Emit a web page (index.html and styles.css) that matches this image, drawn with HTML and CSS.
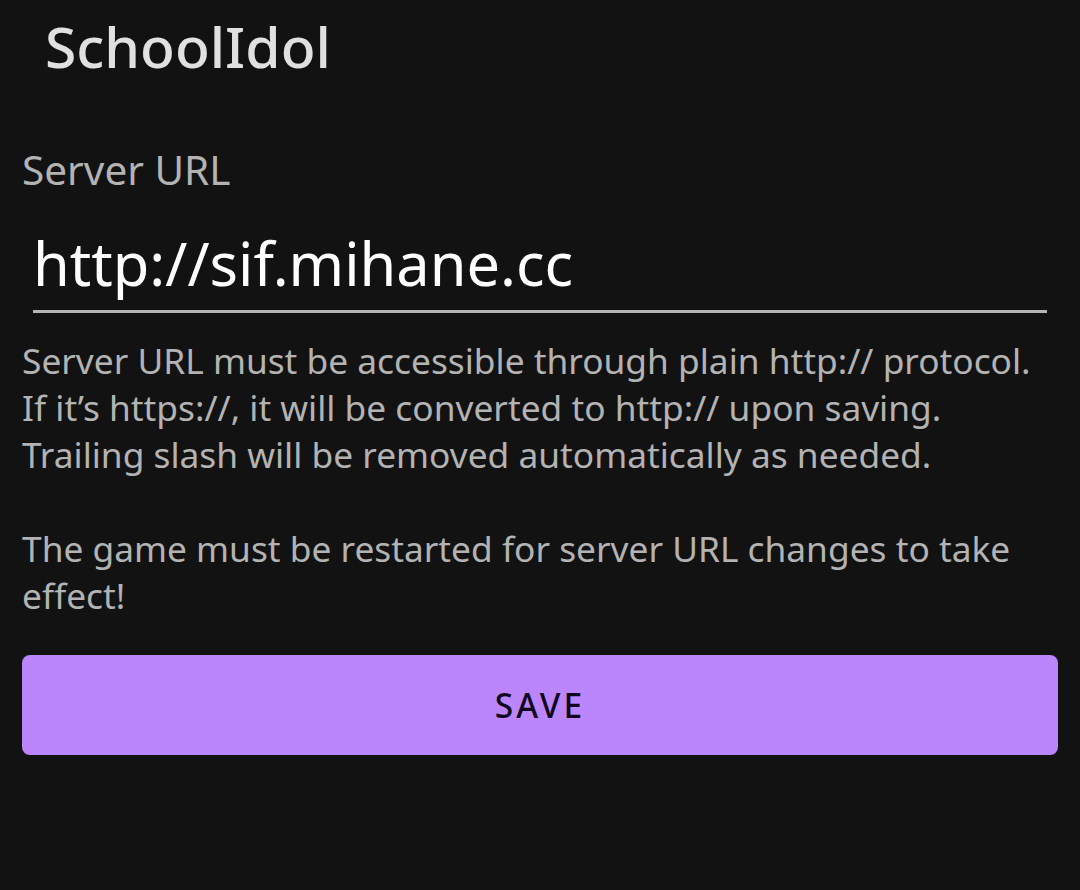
FILE: index.html
```html
<!DOCTYPE html>
<html lang="en">
<head>
<meta charset="utf-8">
<title>SchoolIdol</title>
<link rel="stylesheet" href="styles.css">
</head>
<body>
<div class="screen">
  <header class="appbar">
    <h1 class="title">SchoolIdol</h1>
  </header>
  <main class="content">
    <label class="label" for="url">Server URL</label>
    <div class="field">
      <input id="url" class="input" type="text" value="http://sif.mihane.cc">
    </div>
    <p class="help">Server URL must be accessible through plain http:// protocol.<br>If it’s https://, it will be converted to http:// upon saving.<br>Trailing slash will be removed automatically as needed.<br><br>The game must be restarted for server URL changes to take effect!</p>
    <button class="save" type="button">SAVE</button>
  </main>
</div>
</body>
</html>
```
FILE: styles.css
```css
html, body {
  margin: 0;
  padding: 0;
  background: #121212;
}
.screen {
  width: 1080px;
  height: 890px;
  background: #121212;
  font-family: "Noto Sans", "Open Sans", sans-serif;
  overflow: hidden;
}
.appbar {
  height: 96px;
  padding-left: 45px;
  display: flex;
  align-items: flex-start;
}
.title {
  margin: 0;
  font-size: 57px;
  font-weight: 500;
  color: #e0e0e0;
  line-height: 96px;
  margin-top: -2px;
  letter-spacing: 0;
}
.content {
  padding: 0 22px;
  display: flex;
  flex-direction: column;
}
.label {
  font-size: 40.5px;
  color: #b3b3b3;
  line-height: 52px;
  margin-top: 48px;
}
.field {
  margin: 20px 11px 0 11px;
  border-bottom: 3px solid #b5b5b5;
}
.input {
  width: 100%;
  box-sizing: border-box;
  background: transparent;
  border: 0;
  outline: none;
  padding: 0;
  font-family: inherit;
  font-size: 59.5px;
  color: #ffffff;
  height: 94px;
  line-height: 94px;
}
.help {
  margin: 24px 0 0 0;
  font-size: 35.3px;
  line-height: 47px;
  color: #b3b3b3;
}
.save {
  margin-top: 36px;
  height: 100px;
  border: 0;
  border-radius: 8px;
  background: #bb86fc;
  color: #12061f;
  font-family: inherit;
  font-size: 33.5px;
  font-weight: 500;
  letter-spacing: 3px;
}
```
